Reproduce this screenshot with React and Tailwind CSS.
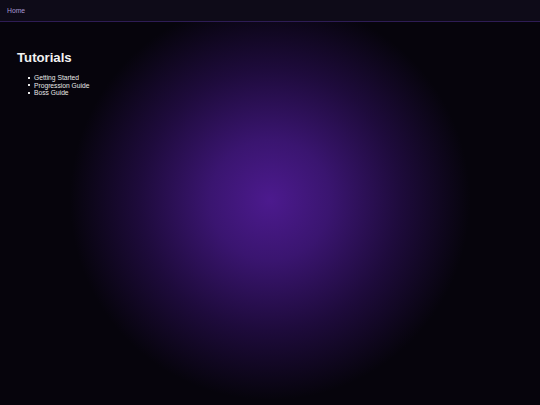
import React from 'react';

const guides = ['Getting Started', 'Progression Guide', 'Boss Guide'];

const App = () => {
  return (
    <div className="relative w-[540px] h-[405px] overflow-hidden bg-[#06040c] font-['Liberation_Sans',Arial,sans-serif] text-white">
      {/* Glow behind the content */}
      <div className="absolute inset-0 bg-[radial-gradient(circle_200px_at_270px_200px,#4c1a8e_0%,#3a1570_30%,#1e0b3c_65%,#06040c_100%)]" />

      <div className="relative flex flex-col">
        <nav className="h-[22px] flex items-center pt-[2px] px-[7px] bg-[#0e0b18] border-b border-[#2e1c55]">
          <a className="text-[6.8px] text-[#a898d2]">Home</a>
        </nav>

        <main className="px-[17px] pt-[28px]">
          <h1 className="text-[13.2px] font-bold leading-[16px] text-[#f2f2f2]">Tutorials</h1>
          <ul className="mt-[8px] flex flex-col text-[6.7px] leading-[7.6px] text-[#e8e8e8]">
            {guides.map((g) => (
              <li key={g} className="flex items-center">
                <span className="w-[2px] h-[2px] ml-[11px] mr-[4px] bg-[#e8e8e8]" />
                <span>{g}</span>
              </li>
            ))}
          </ul>
        </main>
      </div>
    </div>
  );
};

export default App;
